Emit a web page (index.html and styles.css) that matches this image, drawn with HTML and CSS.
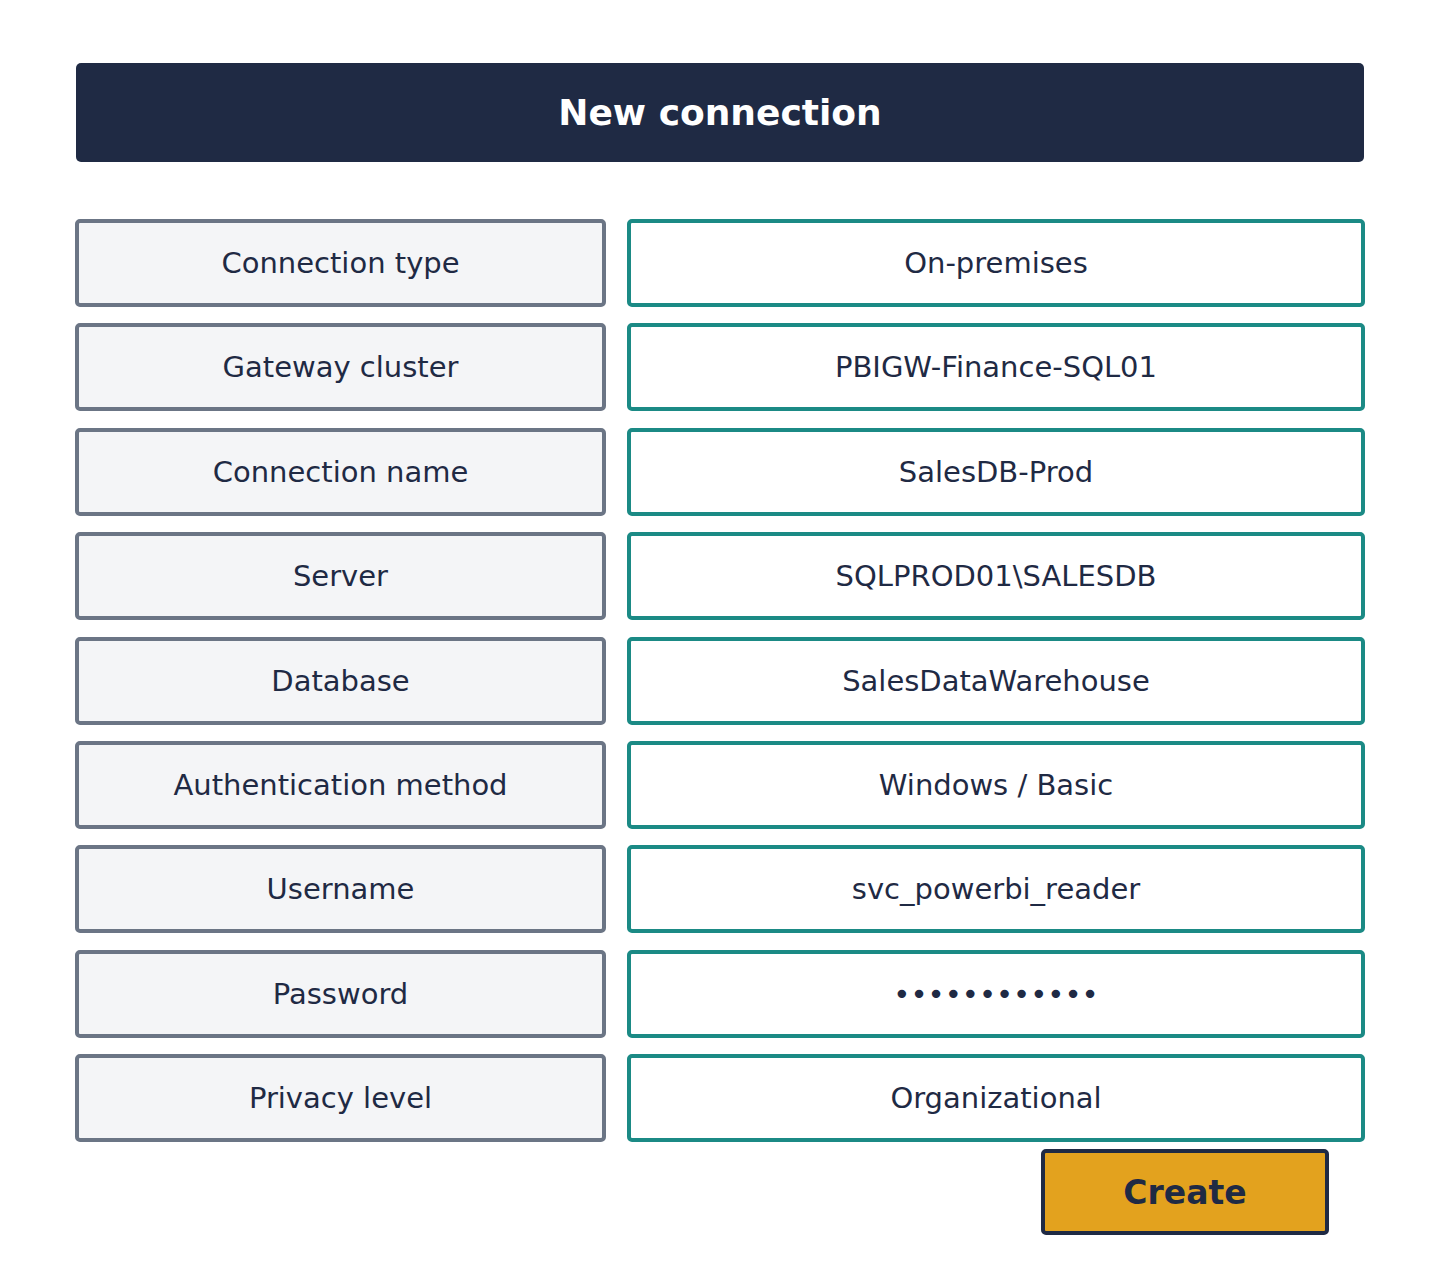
FILE: index.html
```html
<!DOCTYPE html>
<html lang="en">
<head>
  <meta charset="UTF-8">
  <title>New connection</title>
  <link rel="stylesheet" href="styles.css">
</head>
<body>
  <div class="dialog">
    <h1 class="dialog-title">New connection</h1>

    <!-- label / value pairs -->
    <div class="fields">
      <div class="label">Connection type</div>
      <div class="value">On-premises</div>

      <div class="label">Gateway cluster</div>
      <div class="value">PBIGW-Finance-SQL01</div>

      <div class="label">Connection name</div>
      <div class="value">SalesDB-Prod</div>

      <div class="label">Server</div>
      <div class="value">SQLPROD01\SALESDB</div>

      <div class="label">Database</div>
      <div class="value">SalesDataWarehouse</div>

      <div class="label">Authentication method</div>
      <div class="value">Windows / Basic</div>

      <div class="label">Username</div>
      <div class="value">svc_powerbi_reader</div>

      <div class="label">Password</div>
      <div class="value">••••••••••••</div>

      <div class="label">Privacy level</div>
      <div class="value">Organizational</div>
    </div>

    <div class="actions">
      <button class="btn-create" type="button">Create</button>
    </div>
  </div>
</body>
</html>
```

FILE: styles.css
```css
body {
  margin: 0;
  background-color: #ffffff;
  font-family: "DejaVu Sans", "Liberation Sans", sans-serif;
  color: #1f2a44;
}

.dialog {
  width: 1290px;
  padding: 63px 75px 0 75px;
}

.dialog-title {
  margin: 0 1px;
  height: 99px;
  display: flex;
  align-items: center;
  justify-content: center;
  background-color: #1f2a44;
  color: #ffffff;
  border-radius: 5px;
  font-size: 36px;
  font-weight: bold;
}

.fields {
  margin-top: 57px;
  display: grid;
  grid-template-columns: 531px 738px;
  grid-auto-rows: 88px;
  column-gap: 21px;
  row-gap: 16.4px;
}

.label,
.value {
  box-sizing: border-box;
  display: flex;
  align-items: center;
  justify-content: center;
  border: 4px solid;
  border-radius: 5px;
  font-size: 29px;
}

.label {
  background-color: #f4f5f7;
  border-color: #6b7585;
}

.value {
  background-color: #ffffff;
  border-color: #1b8a85;
}

.actions {
  display: flex;
  justify-content: flex-end;
  margin-top: 7px;
  padding-right: 36px;
}

.btn-create {
  box-sizing: border-box;
  width: 288px;
  height: 86px;
  background-color: #e3a21e;
  border: 4px solid #1f2a44;
  border-radius: 5px;
  color: #1f2a44;
  font-family: "DejaVu Sans", "Liberation Sans", sans-serif;
  font-size: 33px;
  font-weight: bold;
}
```
